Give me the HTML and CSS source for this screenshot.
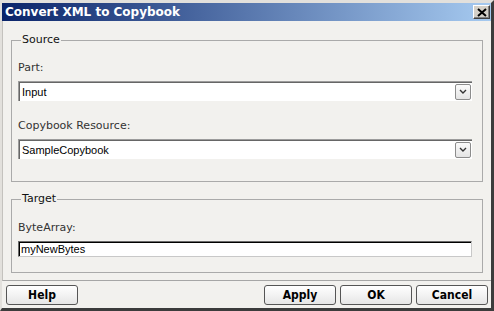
FILE: index.html
```html
<!DOCTYPE html>
<html lang="en">
<head>
  <meta charset="UTF-8">
  <title>Convert XML to Copybook</title>
  <link rel="stylesheet" href="styles.css">
</head>
<body>
  <div class="janela">
    <div class="titulo">
      <span class="titulo-texto">Convert XML to Copybook</span>
      <button class="fechar">
        <svg width="10" height="9" viewBox="0 0 10 9"><path d="M1 1 L9 8 M9 1 L1 8" stroke="#000" stroke-width="2" fill="none"/></svg>
      </button>
    </div>

    <div class="conteudo">
      <fieldset class="grupo grupo-source">
        <legend>Source</legend>
        <div class="rotulo">Part:</div>
        <div class="combo">
          <span>Input</span>
          <span class="seta"><svg width="8" height="5" viewBox="0 0 8 5"><path d="M1 1 L4 4 L7 1" stroke="#333" stroke-width="1.4" fill="none"/></svg></span>
        </div>
        <div class="rotulo rotulo-segundo">Copybook Resource:</div>
        <div class="combo">
          <span>SampleCopybook</span>
          <span class="seta"><svg width="8" height="5" viewBox="0 0 8 5"><path d="M1 1 L4 4 L7 1" stroke="#333" stroke-width="1.4" fill="none"/></svg></span>
        </div>
      </fieldset>

      <fieldset class="grupo grupo-target">
        <legend>Target</legend>
        <div class="rotulo">ByteArray:</div>
        <div class="campo">myNewBytes</div>
      </fieldset>
    </div>

    <div class="botoes">
      <button class="botao">Help</button>
      <div class="botoes-direita">
        <button class="botao">Apply</button>
        <button class="botao">OK</button>
        <button class="botao">Cancel</button>
      </div>
    </div>
  </div>
</body>
</html>
```

FILE: styles.css
```css
body {
  margin: 0;
  font-family: "DejaVu Sans", sans-serif;
  font-size: 11px;
}
.janela {
  width: 494px;
  height: 311px;
  box-sizing: border-box;
  background: #f2f1ee;
  border-top: 3px solid #e2e0dc;
  border-left: 2px solid #e2e0dc;
  border-right: 3px solid #3c3c3c;
  border-bottom: 3px solid #3c3c3c;
  display: flex;
  flex-direction: column;
}
.titulo {
  height: 18px;
  background: linear-gradient(to right, #0a246a, #a6caf0);
  display: flex;
  align-items: center;
  justify-content: space-between;
  padding: 0 1px 0 3px;
}
.titulo-texto {
  color: #fff;
  font-weight: bold;
  font-size: 12px;
  line-height: 14px;
}
.fechar {
  width: 17px;
  height: 14px;
  padding: 0;
  margin: 0;
  background: #d4d0c8;
  border: 1px solid;
  border-color: #fff #404040 #404040 #fff;
  box-shadow: inset -1px -1px 0 #808080;
  display: flex;
  align-items: center;
  justify-content: center;
}
.conteudo {
  padding: 13px 8px 7px 8px;
  border-left: 1px solid #c4c2be;
  border-bottom: 1px solid #a6a6a6;
}
.grupo {
  margin: 0;
  border: 1px solid #aaaaaa;
  padding: 0 10px 22px 6px;
}
.grupo legend {
  padding: 0 1px;
  margin-left: 3px;
  line-height: 12px;
  color: #111;
}
.grupo-source .rotulo:first-of-type {
  margin-top: 15px;
}
.grupo-target {
  margin-top: 11px;
  padding-bottom: 15px;
}
.grupo-target .rotulo {
  margin-top: 16px;
}
.rotulo {
  line-height: 13px;
  color: #333;
  margin-bottom: 7px;
}
.rotulo-segundo {
  margin-top: 18px;
}
.combo {
  height: 20px;
  box-sizing: border-box;
  background: #fff;
  border-top: 1px solid #9c9c9c;
  border-left: 1px solid #9c9c9c;
  box-shadow: inset 1px 1px 0 #666;
  display: flex;
  align-items: center;
  justify-content: space-between;
  padding: 0 1px 0 3px;
  font-family: "Liberation Sans", Arial, sans-serif;
  font-size: 11px;
  color: #000;
}
.seta {
  width: 16px;
  height: 16px;
  box-sizing: border-box;
  border: 1px solid #8c8c8c;
  border-radius: 2px;
  background: linear-gradient(#fbfbfb, #e4e4e4);
  display: flex;
  align-items: center;
  justify-content: center;
}
.campo {
  height: 16px;
  box-sizing: border-box;
  background: #fff;
  border: 1px solid;
  border-color: #6a6a6a #c8c8c8 #c8c8c8 #6a6a6a;
  box-shadow: inset 1px 1px 0 #000;
  padding: 0 2px;
  line-height: 14px;
  font-family: "Liberation Sans", Arial, sans-serif;
  font-size: 11px;
  color: #000;
}
.botoes {
  flex: 1;
  display: flex;
  justify-content: space-between;
  padding: 4px 3px 0 4px;
}
.botoes-direita {
  display: flex;
  gap: 4px;
}
.botao {
  width: 72px;
  height: 20px;
  padding: 0;
  border: 1px solid #555;
  border-radius: 3px;
  background: linear-gradient(#ffffff, #e6e6e6);
  font-family: "DejaVu Sans Condensed", "DejaVu Sans", sans-serif;
  font-weight: bold;
  font-size: 12px;
  color: #000;
}
```
